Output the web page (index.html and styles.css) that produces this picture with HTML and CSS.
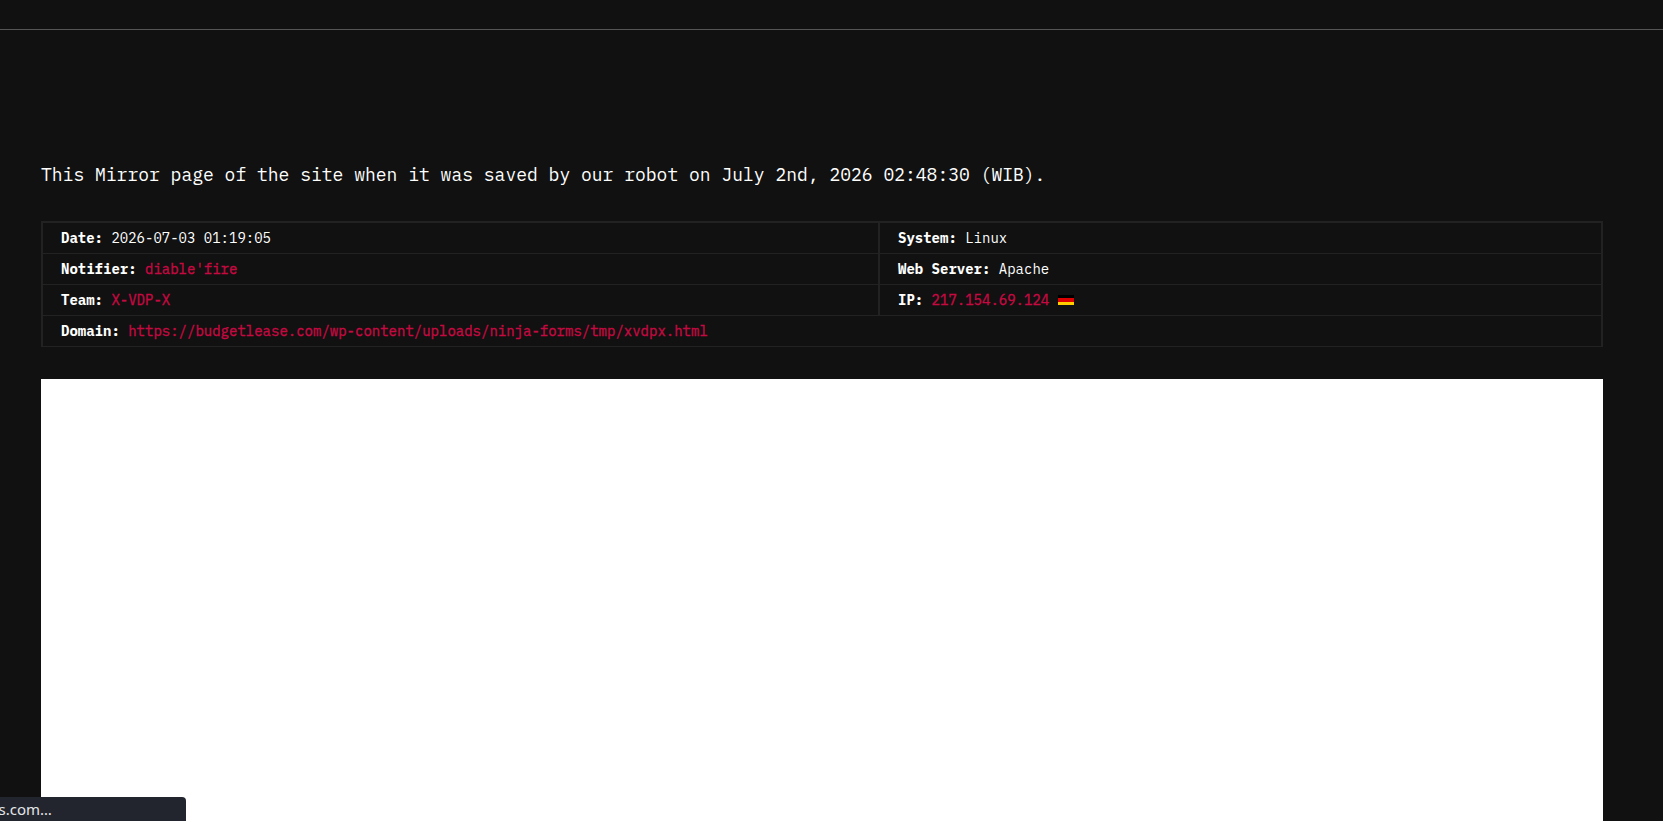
FILE: index.html
```html
<!DOCTYPE html>
<html lang="en">
<head>
<meta charset="utf-8">
<title>Mirror</title>
<link rel="stylesheet" href="styles.css">
</head>
<body>
<div class="topbar"></div>
<div class="container">
  <p class="saved">This Mirror page of the site when it was saved by our robot on July 2nd, 2026 02:48:30 (WIB).</p>

  <table class="info" cellspacing="0" cellpadding="0">
    <tbody>
      <tr>
        <td class="left"><b>Date:</b> 2026-07-03 01:19:05</td>
        <td><b>System:</b> Linux</td>
      </tr>
      <tr>
        <td class="left"><b>Notifier:</b> <a href="#">diable'fire</a></td>
        <td><b>Web Server:</b> Apache</td>
      </tr>
      <tr>
        <td class="left"><b>Team:</b> <a href="#">X-VDP-X</a></td>
        <td><b>IP:</b> <a href="#">217.154.69.124</a> <svg class="flag" width="16" height="10" viewBox="0 0 16 10"><path fill="#000" d="M0 0h16v3H0z"/><path fill="#d00" d="M0 3h16v4H0z"/><path fill="#ffce00" d="M0 7h16v3H0z"/></svg></td>
      </tr>
      <tr>
        <td colspan="2"><b>Domain:</b> <a href="#">https://budgetlease.com/wp-content/uploads/ninja-forms/tmp/xvdpx.html</a></td>
      </tr>
    </tbody>
  </table>

  <div class="mirror"></div>
</div>
<div class="status">s.com…</div>
</body>
</html>
```
FILE: styles.css
```css
body{margin:0; height:821px; overflow:hidden; background:#111; color:#fff; font-family:"IBM Plex Mono", "Liberation Mono", monospace; font-size:14px;}

a{color:#c70942; text-decoration:none; -webkit-text-stroke:0.35px #c70942;}

.topbar{height:29px; border-bottom:1px solid #555;}

.container{width:1562px; margin-left:41px; padding-top:133px;}

.saved{margin:0 0 34px; font-size:18px; line-height:24px;}

.info{width:1562px; table-layout:fixed; border:2px solid #222; border-bottom:0;}

.info td{height:30px; padding:0 0 0 18px; border-bottom:1px solid #222; line-height:20px; white-space:pre;}

.info .left{width:817px; border-right:2px solid #222;}

.flag{vertical-align:0;}

.mirror{height:442px; margin-top:32px; background:#fff;}

.status{position:absolute; left:0; bottom:0; width:186px; height:24px; background:#23252e; color:#e4e5e8; border-radius:0 4px 0 0; font:15px/25px "Noto Sans", sans-serif; text-indent:-1.5px;}
```
